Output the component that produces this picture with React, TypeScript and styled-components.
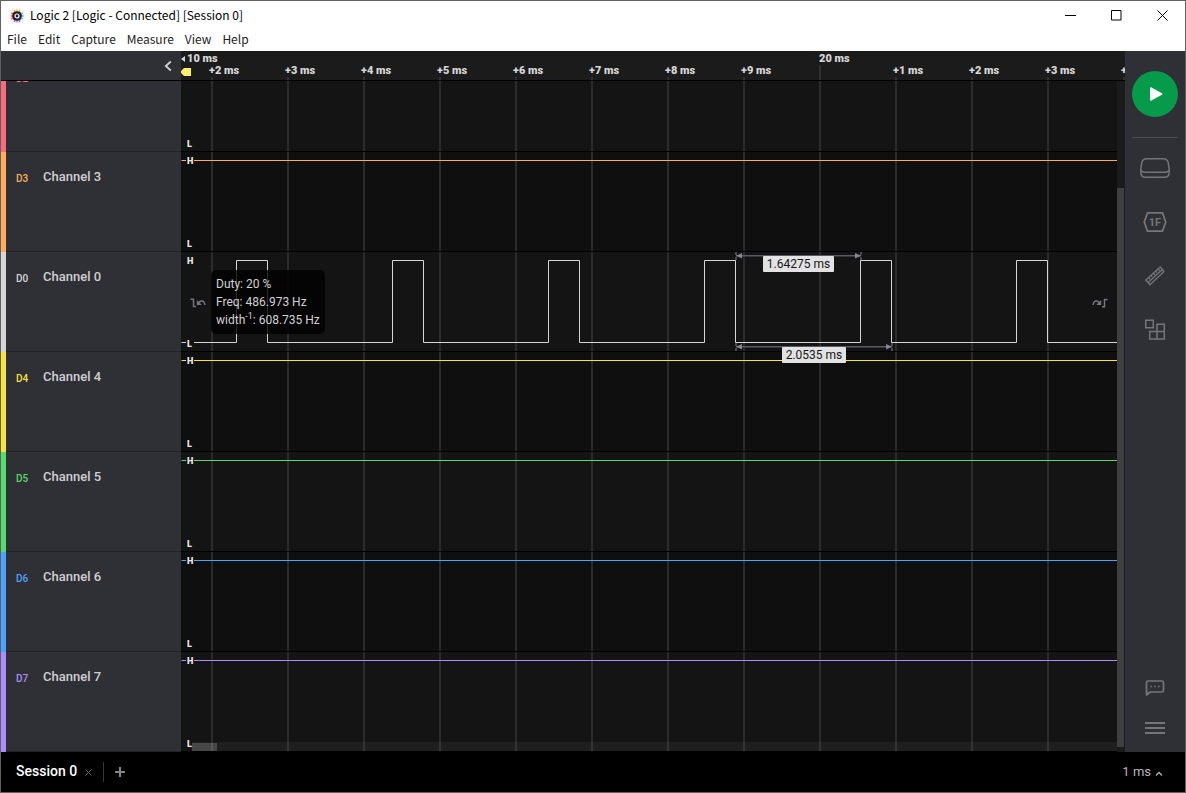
import React from "react";
import styled, { createGlobalStyle } from "styled-components";

const GlobalStyle = createGlobalStyle`
  *, *::before, *::after { box-sizing: border-box; }
  body { margin: 0; background: #000; font-family: Roboto, "Liberation Sans", sans-serif; }
  button { border: 0; padding: 0; background: none; color: inherit; font: inherit; }
  svg { display: block; flex: none; }
`;

/* ---------- window ---------- */

const Window = styled.div`
  display: flex;
  flex-direction: column;
  height: 100vh;
  min-height: 400px;
  border: 1px solid #5f6262;
  background: #000;
`;

const TitleBar = styled.header`
  display: flex;
  align-items: center;
  height: 29px;
  padding-left: 8px;
  background: #fff;
  color: #000;
`;

const Title = styled.h1`
  flex: 1;
  margin: 0 0 0 5px;
  padding-bottom: 2px;
  font: 400 12px/16px "Noto Sans CJK KR", "Noto Sans", sans-serif;
`;

const CaptionButton = styled.button`
  display: grid;
  place-items: center;
  width: 46px;
  height: 29px;
`;

const MenuBar = styled.nav`
  display: flex;
  align-items: flex-start;
  gap: 11px;
  height: 21px;
  padding-left: 6px;
  background: #fff;
  color: #222;
`;

const MenuItem = styled.button`
  font: 400 12px/18px "Noto Sans CJK KR", "Noto Sans", sans-serif;
`;

const Body = styled.div`
  display: flex;
  flex: 1;
  min-height: 0;
`;

/* ---------- capture view ---------- */

const Capture = styled.main`
  display: flex;
  flex-direction: column;
  flex: 1;
  min-width: 0;
`;

const Header = styled.div`
  display: flex;
  flex: none;
  height: 30px;
  border-bottom: 1px solid #000;
`;

const HeaderSide = styled.div`
  display: flex;
  flex: none;
  align-items: center;
  justify-content: flex-end;
  width: 180px;
  padding-right: 9px;
  background: #2f3036;
  color: #d4d4d6;
`;

const Ruler = styled.div`
  display: flex;
  flex: 1;
  min-width: 0;
  overflow: hidden;
  background: #1b1b1b;
  color: #d6d6d6;
  font-size: 11px;
  font-weight: 900;
  line-height: 12px;
  white-space: nowrap;
`;

const RulerStart = styled.div`
  flex: none;
  width: 28px;
  padding-top: 2px;
`;

const RulerOrigin = styled.div`
  display: flex;
  align-items: center;
  gap: 2px;
`;

const Tick = styled.div<{ $major?: boolean }>`
  flex: none;
  width: 76px;
  padding-top: ${(p) => (p.$major ? 2 : 14)}px;
  padding-left: ${(p) => (p.$major ? 2 : 0)}px;

  &::after {
    content: "";
    display: block;
    width: 2px;
    height: 15px;
    margin-left: ${(p) => (p.$major ? 0 : 2)}px;
    background: #303033;
  }
`;

const Scroller = styled.div`
  position: relative;
  display: flex;
  flex: 1;
  min-height: 0;
  background: #1b1b1b;
`;

const Channels = styled.div`
  display: flex;
  flex: 1;
  flex-direction: column;
  justify-content: flex-end;
  min-width: 0;
  overflow: hidden;
`;

const Channel = styled.section`
  display: flex;
  flex: none;
  height: 100px;
`;

const ChannelLabel = styled.div<{ $color: string }>`
  display: flex;
  flex: none;
  align-items: flex-start;
  width: 180px;
  padding: 16px 0 0 10px;
  border-left: 5px solid ${(p) => p.$color};
  background: #2f3036;
  box-shadow: inset 0 -1px #232428;
`;

const ChannelId = styled.span<{ $color: string }>`
  width: 27px;
  color: ${(p) => p.$color};
  font-size: 10px;
  font-weight: 500;
  line-height: 22px;
`;

const ChannelName = styled.span`
  color: #cfcfd1;
  font-size: 13px;
  font-weight: 500;
  line-height: 17px;
`;

const Lane = styled.div<{ $shade: string }>`
  position: relative;
  display: grid;
  flex: 1;
  min-width: 0;
  border-bottom: 1px solid #000;
  background: ${(p) => p.$shade};

  & > * { grid-area: 1 / 1; }
`;

const Plot = styled.svg`
  width: 100%;
  height: 99px;
  overflow: hidden;
`;

const Levels = styled.div<{ $shade: string }>`
  display: flex;
  flex-direction: column;
  justify-content: space-between;
  justify-self: start;
  padding: 4px 0 1px 5px;
  color: #e8e8e8;
  font-size: 9px;
  font-weight: 900;
  line-height: 11px;

  & > span {
    padding: 0 1px;
    background: ${(p) => p.$shade};
  }
`;

const EdgeNav = styled.div`
  display: flex;
  align-items: center;
  justify-content: space-between;
  padding: 2px 9px 0;
  color: #74757e;
`;

const Measure = styled.div<{ $y: number; $width: number }>`
  position: absolute;
  z-index: 1;
  left: 554px;
  top: ${(p) => p.$y}px;
  display: flex;
  flex-direction: column;
  align-items: center;
  width: ${(p) => p.$width}px;
`;

const MeasureText = styled.span`
  z-index: 1;
  margin-top: -4px;
  padding: 0 4px;
  border-radius: 1px;
  background: #e2e2e2;
  color: #161616;
  font-size: 12px;
  line-height: 16px;
  white-space: nowrap;
`;

const Tooltip = styled.div`
  position: absolute;
  z-index: 1;
  left: 30px;
  top: 18px;
  padding: 5px;
  border-radius: 5px;
  background: rgba(0, 0, 0, 0.8);
  color: #d2d2d2;
  font-size: 12px;
  line-height: 18px;
  white-space: nowrap;

  sup { font-size: 9px; line-height: 0; }
`;

const VerticalTrack = styled.div`
  flex: none;
  width: 8px;
  padding: 107px 1px 5px 0;
  background: #1b1b1b;
`;

const VerticalThumb = styled.div`
  height: 100%;
  background: #3f3f3f;
`;

const HorizontalTrack = styled.div`
  position: absolute;
  right: 8px;
  bottom: 1px;
  left: 191px;
  height: 9px;
  padding-top: 1px;
  background: rgba(255, 255, 255, 0.05);
`;

const HorizontalThumb = styled.div`
  width: 25px;
  height: 8px;
  background: rgba(255, 255, 255, 0.18);
`;

/* ---------- tool rail ---------- */

const Rail = styled.aside`
  display: flex;
  flex: none;
  flex-direction: column;
  align-items: center;
  width: 60px;
  padding: 20px 0 4px;
  background: #2f3036;
  color: #74757b;
`;

const PlayButton = styled.button`
  display: grid;
  flex: none;
  place-items: center;
  width: 46px;
  height: 46px;
  border-radius: 50%;
  background: #069a4b;
  color: #fff;
`;

const RailDivider = styled.hr`
  flex: none;
  width: 46px;
  height: 1px;
  margin: 20px 0 3px;
  border: 0;
  background: #4a4b51;
`;

const RailButton = styled.button<{ $height: number }>`
  display: grid;
  flex: none;
  place-items: center;
  width: 46px;
  height: ${(p) => p.$height}px;
`;

const Spacer = styled.div`
  flex: 1;
`;

/* ---------- session bar ---------- */

const SessionBar = styled.footer`
  display: flex;
  flex: none;
  align-items: center;
  height: 40px;
  padding: 0 22px 0 15px;
  background: #000;
  color: #a9a9ad;
`;

const SessionTab = styled.button`
  padding-bottom: 2px;
  color: #fff;
  font-size: 14px;
  font-weight: 500;
  line-height: 20px;
`;

const CloseTab = styled.button`
  margin: 0 11px 0 8px;
  color: #66666a;
`;

const TabDivider = styled.div`
  width: 1px;
  height: 20px;
  margin-right: 11px;
  background: #37373a;
`;

const AddTab = styled.button`
  color: #85858c;
`;

const TimeScale = styled.button`
  display: flex;
  align-items: center;
  gap: 4px;
  color: #b5b5b8;
  font-size: 13px;
  line-height: 20px;
`;

/* ---------- drawings ---------- */

const LogicIcon = () => (
  <svg width="16" height="16" viewBox="0 0 16 16" aria-hidden="true">
    <rect x=".5" y=".5" width="15" height="15" rx="4" fill="#f4f5fb" />
    <g strokeWidth="1.500">
      <path d="M5.500 2v3M10.500 2v3" stroke="#f5a623" />
      <path d="M8 1.500v3" stroke="#f0c030" />
      <path d="M2 5.500h3M2 10.500h3" stroke="#ff5a67" />
      <path d="M1.500 8h3" stroke="#ff6f5b" />
      <path d="M11 5.500h3M11 10.500h3" stroke="#3fc3e8" />
      <path d="M11.500 8h3" stroke="#4c8dff" />
      <path d="M5.500 11v3M10.500 11v3" stroke="#a35cf0" />
      <path d="M8 11.500v3" stroke="#c77cf5" />
    </g>
    <circle cx="8" cy="8" r="4.800" fill="#222226" />
    <circle cx="8" cy="8" r="2" fill="none" stroke="#fff" strokeWidth="1.200" />
  </svg>
);

const DeviceIcon = () => (
  <svg width="32" height="22" viewBox="0 0 32 22" fill="none" stroke="currentColor" strokeWidth="1.500">
    <path d="M8 1.700h16c3.600 0 4.800 1.200 5.300 4.200l.9 6.600v2.500c0 3.600-1.400 5.300-4.700 5.300h-19c-3.300 0-4.700-1.700-4.700-5.300v-2.500l.9-6.600c.5-3 1.700-4.200 5.300-4.200z" />
    <path d="M2 13.800c1 1.100 2.200 1.400 4 1.400h20c1.800 0 3-.3 4-1.400" />
  </svg>
);

const AnalyzerIcon = () => (
  <svg width="24" height="22" viewBox="0 0 24 22" fill="none" stroke="currentColor" strokeWidth="1.800">
    <path d="M4.500 1.800h15l3.200 9.200-3.200 9.200h-15L1.300 11z" strokeLinejoin="round" />
    <text x="12" y="15" textAnchor="middle" fill="currentColor" stroke="none" fontSize="11" fontWeight="700">1F</text>
  </svg>
);

const RulerIcon = () => (
  <svg width="22" height="22" viewBox="0 0 22 22" fill="none" stroke="currentColor" strokeWidth="1.300">
    <path d="M16.300 2L20 6.500 6 19.800 1.800 15z" strokeLinejoin="round" />
    <path d="M4.200 17.600L18.300 4.500" />
    <path d="M4.600 12.500l1.600 1.900M7 10.400l1.300 1.500M9.400 8.200l1.500 1.800M11.700 6.100L13 7.600M14 4l1.600 1.900" />
  </svg>
);

const BlocksIcon = () => (
  <svg width="22" height="22" viewBox="0 0 22 22" fill="none" stroke="currentColor" strokeWidth="1.500">
    <path d="M1.700 1.200h7.600v7.600H1.700zM13 5.200h7.300v7.300H13zM5.700 12.500H13v7.600H5.700zM13 12.500h7.300v7.600H13z" />
  </svg>
);

const CommentIcon = () => (
  <svg width="20" height="18" viewBox="0 0 20 18" fill="none" stroke="currentColor" strokeWidth="1.700">
    <path d="M1.500 16V3.500Q1.500 2 3 2h14q1.500 0 1.500 1.500v8q0 1.500-1.500 1.500H5z" strokeLinejoin="round" />
    <path d="M5.500 7.500h1.500M9.200 7.500h1.500M13 7.500h1.500" />
  </svg>
);

const MenuIcon = () => (
  <svg width="20" height="12" viewBox="0 0 20 12" fill="currentColor">
    <path d="M0 0h20v2H0zM0 5h20v2H0zM0 10h20v2H0z" />
  </svg>
);

const PrevEdgeIcon = () => (
  <svg width="16" height="10" viewBox="0 0 16 10" fill="none" stroke="currentColor" strokeWidth="1.500">
    <path d="M.5 1.200h3v7.300H6" />
    <path d="M8 5.800C9.500 2.500 14 1 15 7" />
    <path d="M6.800 2v5h5z" fill="currentColor" stroke="none" />
  </svg>
);

const NextEdgeIcon = () => (
  <svg width="16" height="10" viewBox="0 0 16 10" fill="none" stroke="currentColor" strokeWidth="1.500">
    <path d="M10 8.800h2.500V1.500h3" />
    <path d="M1 7C2 1 6.500 2.500 8 5.800" />
    <path d="M9.200 2v5h-5z" fill="currentColor" stroke="none" />
  </svg>
);

const Arrows = ({ width }: { width: number }) => (
  <svg width={width} height="8" viewBox={`0 0 ${width} 8`} stroke="#5b5b63" aria-hidden="true">
    <path d={`M1 0v8M${width - 1} 0v8`} strokeWidth="1.500" strokeDasharray="3 2" />
    <path d={`M1 3.700H${width - 1}`} strokeWidth="1.500" />
    <path d={`M1 3.700l6-2.700v5.400zM${width - 1} 3.700l-6-2.700v5.400z`} fill="#85868f" stroke="none" />
  </svg>
);

/* ---------- data ---------- */

const GRID_START = 30;
const GRID_STEP = 76;
const GRID_LINES = Array.from({ length: 50 }, (_, i) => GRID_START + i * GRID_STEP);
const PLOT_END = 4000;

const PULSE_PERIOD = 156;
const pulses = Array.from({ length: 6 }, (_, i) => {
  const x = 55 + i * PULSE_PERIOD;
  return `H${x}V8H${x + 31}V90`;
}).join("");

const HIGH = `M0 8H${PLOT_END}`;

const channels = [
  { id: "D2", name: "Channel 2", color: "#ff6b7d" },
  { id: "D3", name: "Channel 3", color: "#ffad5c", wave: HIGH },
  { id: "D0", name: "Channel 0", color: "#d6d6d6", wave: `M0 90${pulses}H${PLOT_END}`, measured: true },
  { id: "D4", name: "Channel 4", color: "#fbe33a", wave: HIGH },
  { id: "D5", name: "Channel 5", color: "#55dd6c", wave: HIGH },
  { id: "D6", name: "Channel 6", color: "#4ba3ff", wave: HIGH },
  { id: "D7", name: "Channel 7", color: "#ac8dff", wave: HIGH },
];

const ticks = ["+2 ms", "+3 ms", "+4 ms", "+5 ms", "+6 ms", "+7 ms", "+8 ms", "+9 ms", "20 ms", "+1 ms", "+2 ms", "+3 ms", "+4 ms"];

export default function App() {
  return (
    <>
      <GlobalStyle />
      <Window>
        <TitleBar>
          <LogicIcon />
          <Title>Logic 2 [Logic - Connected] [Session 0]</Title>
          <CaptionButton aria-label="Minimize">
            <svg width="11" height="11" stroke="#000"><path d="M0 5.500h11" /></svg>
          </CaptionButton>
          <CaptionButton aria-label="Maximize">
            <svg width="11" height="11" fill="none" stroke="#000"><path d="M.5.500h9.500v9.500H.5z" /></svg>
          </CaptionButton>
          <CaptionButton aria-label="Close">
            <svg width="11" height="11" stroke="#000"><path d="M.5.500l10 10M10.500.500l-10 10" /></svg>
          </CaptionButton>
        </TitleBar>
        <MenuBar>
          {["File", "Edit", "Capture", "Measure", "View", "Help"].map((item) => (
            <MenuItem key={item}>{item}</MenuItem>
          ))}
        </MenuBar>

        <Body>
          <Capture>
            <Header>
              <HeaderSide>
                <button aria-label="Collapse channels">
                  <svg width="8" height="12" fill="none" stroke="currentColor" strokeWidth="1.700">
                    <path d="M6.800 1.500L1.800 6l5 4.500" />
                  </svg>
                </button>
              </HeaderSide>
              <Ruler>
                <RulerStart>
                  <RulerOrigin>
                    <svg width="4" height="6" fill="#d6d6d6"><path d="M4 0v6L0 3z" /></svg>
                    10 ms
                  </RulerOrigin>
                  <svg width="10" height="11" fill="#fbee6a"><path d="M3 3h7v8H3L0 8V6z" /></svg>
                </RulerStart>
                {ticks.map((tick, i) => (
                  <Tick key={i} $major={!tick.startsWith("+")}>{tick}</Tick>
                ))}
              </Ruler>
            </Header>

            <Scroller>
              <Channels>
                {channels.map((channel, i) => {
                  const shade = i % 2 === 0 ? "#141414" : "#0f0f0f";
                  return (
                    <Channel key={channel.id}>
                      <ChannelLabel $color={channel.color}>
                        <ChannelId $color={channel.color}>{channel.id}</ChannelId>
                        <ChannelName>{channel.name}</ChannelName>
                      </ChannelLabel>
                      <Lane $shade={shade}>
                        <Plot aria-hidden="true">
                          {GRID_LINES.map((x) => (
                            <rect key={x} x={x} width="2" height="100" fill="#2b2b2d" />
                          ))}
                          {channel.wave && (
                            <path d={channel.wave} transform="translate(.5 .5)" fill="none" stroke={channel.color} />
                          )}
                        </Plot>
                        <Levels $shade={shade}>
                          <span>H</span>
                          <span>L</span>
                        </Levels>
                        {channel.measured && (
                          <>
                            <EdgeNav>
                              <button aria-label="Previous edge"><PrevEdgeIcon /></button>
                              <button aria-label="Next edge"><NextEdgeIcon /></button>
                            </EdgeNav>
                            <Measure $y={0} $width={127}>
                              <Arrows width={127} />
                              <MeasureText>1.64275 ms</MeasureText>
                            </Measure>
                            <Measure $y={91} $width={158}>
                              <Arrows width={158} />
                              <MeasureText>2.0535 ms</MeasureText>
                            </Measure>
                            <Tooltip role="tooltip">
                              <div>Duty: 20 %</div>
                              <div>Freq: 486.973 Hz</div>
                              <div>width<sup>-1</sup>: 608.735 Hz</div>
                            </Tooltip>
                          </>
                        )}
                      </Lane>
                    </Channel>
                  );
                })}
              </Channels>
              <VerticalTrack><VerticalThumb /></VerticalTrack>
              <HorizontalTrack><HorizontalThumb /></HorizontalTrack>
            </Scroller>
          </Capture>

          <Rail>
            <PlayButton aria-label="Start capture">
              <svg width="18" height="16" fill="currentColor"><path d="M4 2.500Q4 .8 5.500 1.500L16 7.200q1 .8 0 1.600L5.500 14.500Q4 15.200 4 13.500z" /></svg>
            </PlayButton>
            <RailDivider />
            <RailButton $height={54} aria-label="Device"><DeviceIcon /></RailButton>
            <RailButton $height={54} aria-label="Analyzers"><AnalyzerIcon /></RailButton>
            <RailButton $height={54} aria-label="Measurements"><RulerIcon /></RailButton>
            <RailButton $height={54} aria-label="Extensions"><BlocksIcon /></RailButton>
            <Spacer />
            <RailButton $height={40} aria-label="Feedback"><CommentIcon /></RailButton>
            <RailButton $height={40} aria-label="Main menu"><MenuIcon /></RailButton>
          </Rail>
        </Body>

        <SessionBar>
          <SessionTab>Session 0</SessionTab>
          <CloseTab aria-label="Close session">
            <svg width="7" height="7" stroke="currentColor"><path d="M.5.500l6 6M6.500.500l-6 6" /></svg>
          </CloseTab>
          <TabDivider />
          <AddTab aria-label="New session">
            <svg width="10" height="10" stroke="currentColor" strokeWidth="2"><path d="M0 5h10M5 0v10" /></svg>
          </AddTab>
          <Spacer />
          <TimeScale>
            1 ms
            <svg width="8" height="12" fill="none" stroke="currentColor" strokeWidth="1.300"><path d="M1 9.500l3-3 3 3" /></svg>
          </TimeScale>
        </SessionBar>
      </Window>
    </>
  );
}
